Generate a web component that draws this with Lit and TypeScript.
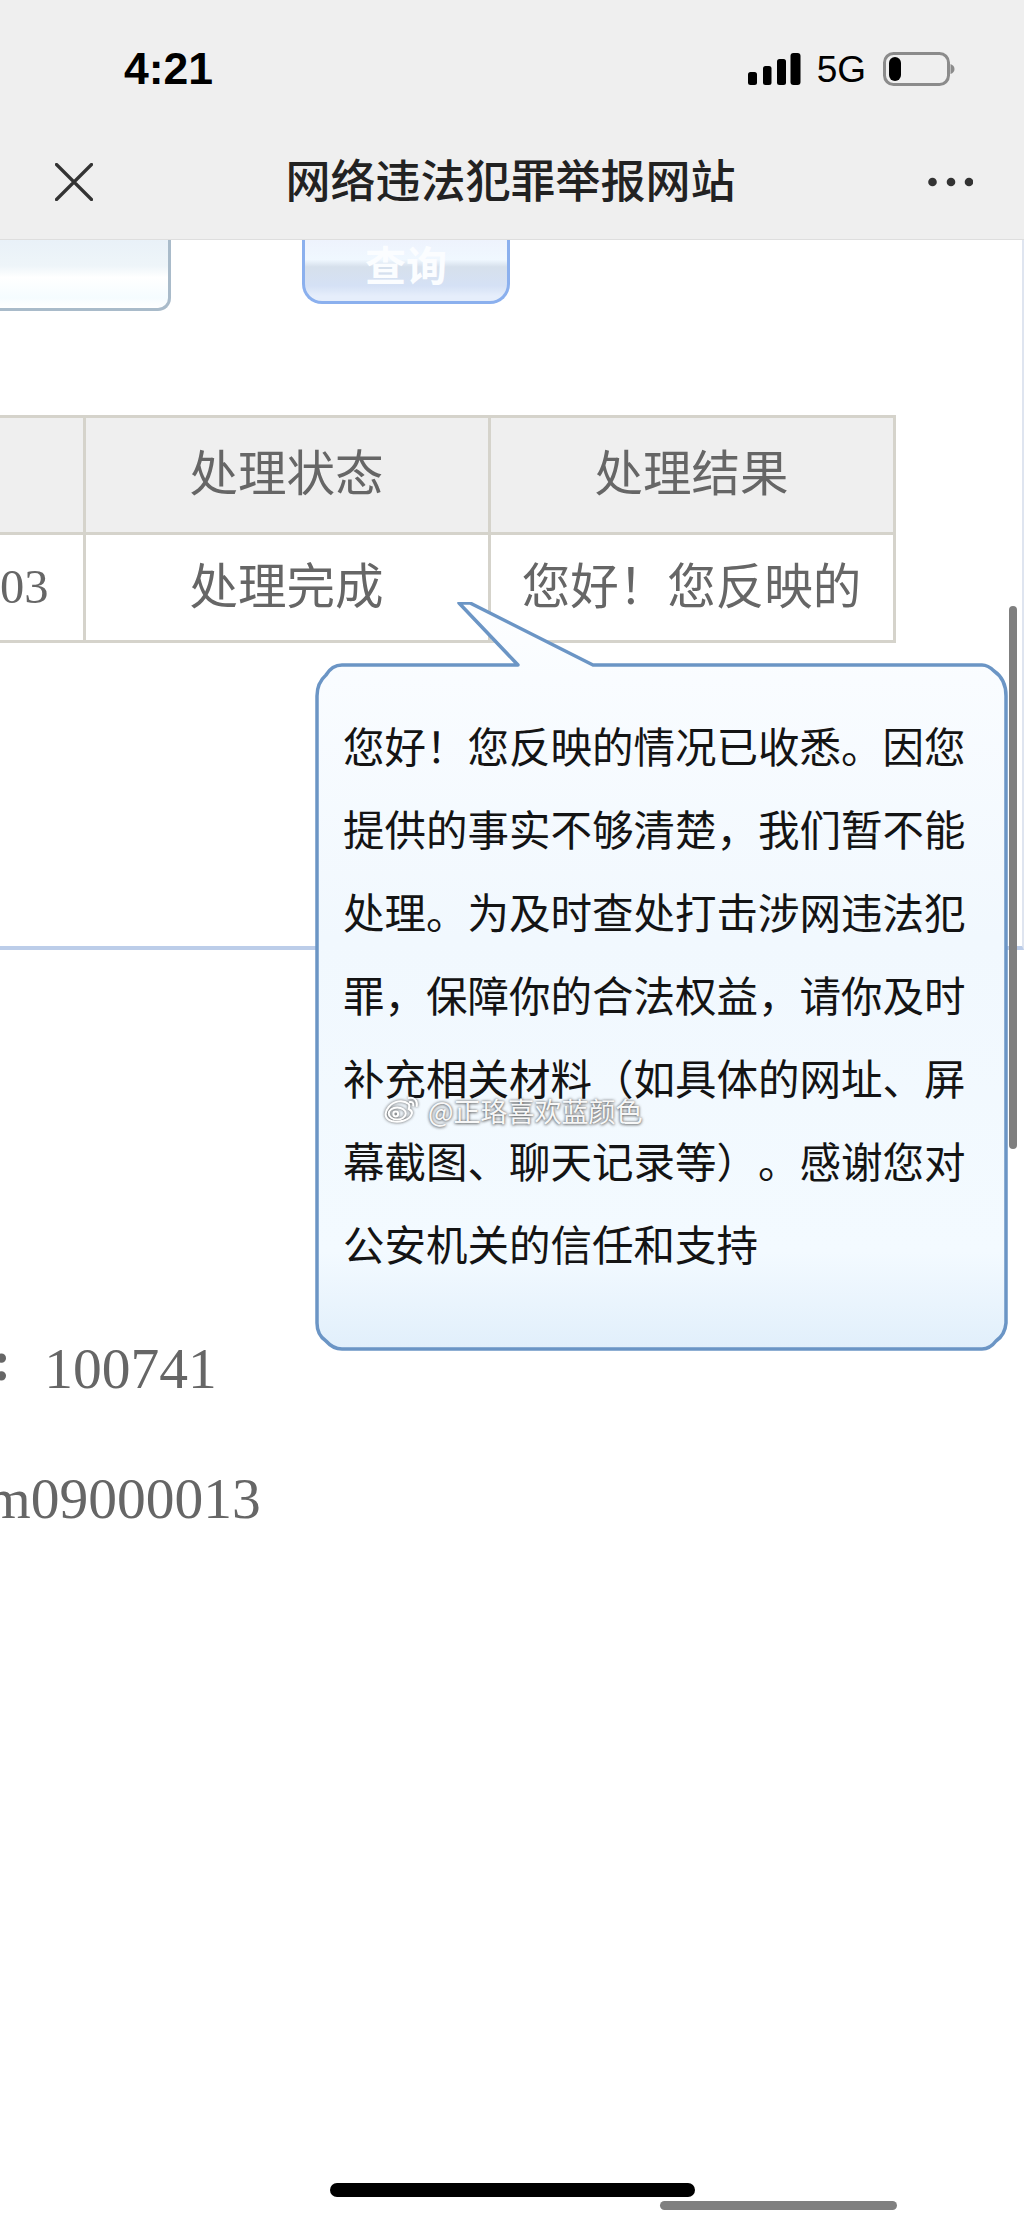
import { LitElement, html, css, svg } from "lit";
import { customElement } from "lit/decorators.js";

const LINES = [
  "您好！您反映的情况已收悉。因您",
  "提供的事实不够清楚，我们暂不能",
  "处理。为及时查处打击涉网违法犯",
  "罪，保障你的合法权益，请你及时",
  "补充相关材料（如具体的网址、屏",
  "幕截图、聊天记录等）。感谢您对",
  "公安机关的信任和支持",
];

const bubblePath = "M342 63 L518 63 L459 1 L470 1 L593 63 L982 63 Q988 63 994 69 Q1006 77 1006 94 L1006 721 Q1005 733 996 739 Q990 747 982 747 L342 747 Q333 747 326 739 Q317 733 317 721 L317 94 Q317 81 326 73 Q332 63 342 63 Z";

@customElement("app-root")
export class AppRoot extends LitElement {
  static styles = css`
    :host {
      display: block;
      position: relative;
      width: 1024px;
      height: 2217px;
      overflow: hidden;
      background: #fff;
      font-family: "Liberation Sans", "Noto Sans CJK SC", sans-serif;
    }
    .header {
      box-sizing: border-box;
      height: 240px;
      background: #efefef;
      border-bottom: 1px solid #dedede;
      display: flex;
      flex-direction: column;
    }
    .status {
      display: flex;
      align-items: center;
      height: 138px;
      padding: 0 69px 0 124px;
    }
    .time {
      font-size: 44.5px;
      font-weight: 700;
      color: #000;
      line-height: 1;
    }
    .status-right {
      margin-left: auto;
      display: flex;
      align-items: center;
      gap: 16px;
    }
    .net {
      font-size: 37px;
      color: #000;
      line-height: 1;
      margin-right: 1px;
    }
    .signal,
    .battery {
      display: block;
    }
    .nav {
      display: flex;
      align-items: center;
      justify-content: space-between;
      padding: 0 51px 0 55px;
      height: 88px;
    }
    .title {
      font-family: "Noto Sans CJK SC", sans-serif;
      font-size: 45px;
      font-weight: 500;
      color: #222;
      line-height: 1;
      margin-bottom: 7px;
    }
    .panel {
      box-sizing: border-box;
      height: 710px;
      border-right: 2px solid #dfe5f0;
      border-bottom: 4px solid #bccde9;
      overflow: hidden;
    }
    .search {
      display: flex;
      align-items: flex-start;
      gap: 131px;
      height: 71px;
      margin-bottom: 104px;
    }
    .input {
      box-sizing: border-box;
      width: 171px;
      height: 71px;
      border-right: 3px solid #a9bbca;
      border-bottom: 3px solid #a9bbca;
      border-bottom-right-radius: 13px;
      background: linear-gradient(#e9f1f8 0%, #eef5f9 38%, #fff 55%, #f5fcff 85%, #fff 100%);
    }
    .btn {
      box-sizing: border-box;
      width: 208px;
      height: 64px;
      border: 3.5px solid #8bb0ee;
      border-top: none;
      border-radius: 0 0 20px 20px;
      background: linear-gradient(#eef3fd 0%, #f0f8ff 32%, #d6e0ec 44%, #d5e1f5 75%, #e6eefb 92%);
      color: #fbfdff;
      font-family: "Noto Sans CJK SC", sans-serif;
      font-size: 41px;
      font-weight: 700;
      text-align: center;
      line-height: 46px;
    }
    table {
      border-collapse: collapse;
      table-layout: fixed;
      width: 894px;
      font-family: "Noto Sans CJK SC", sans-serif;
      color: #666;
      font-size: 48.5px;
    }
    th,
    td {
      box-sizing: border-box;
      border: 3px solid #d5d3cb;
      padding: 0 0 9px;
      text-align: center;
      white-space: nowrap;
      overflow: hidden;
      font-weight: 400;
      line-height: 1;
    }
    th {
      height: 117px;
      background: #efefef;
    }
    td {
      height: 108px;
    }
    th:first-child,
    td:first-child {
      border-left: none;
    }
    .c0 {
      width: 84px;
    }
    .c1 {
      width: 405px;
    }
    .c2 {
      width: 405px;
    }
    td.num {
      font-family: "Liberation Serif", serif;
      text-align: right;
      padding: 0 36px 0 0;
    }
    .foot {
      font-family: "Liberation Serif", serif;
      font-size: 57.5px;
      color: #666;
      line-height: 1;
    }
    .post {
      display: flex;
      align-items: center;
      gap: 33px;
      margin-top: 382px;
    }
    .colon {
      margin-left: -8px;
      margin-bottom: 16px;
      font-weight: 700;
    }
    .icp {
      margin-top: 64px;
      margin-left: -14px;
    }
    .bubble {
      position: absolute;
      left: 0;
      top: 602px;
      width: 1024px;
      height: 750px;
    }
    .bubble svg {
      position: absolute;
      left: 0;
      top: 0;
    }
    .bubble-text {
      position: absolute;
      left: 343px;
      top: 102px;
      font-family: "Noto Sans CJK SC", sans-serif;
      font-size: 41.5px;
      line-height: 83px;
      color: #141414;
      white-space: nowrap;
      text-spacing-trim: space-all;
    }
    .bubble-text div {
      height: 83px;
    }
    .scroll-v {
      position: absolute;
      left: 1009px;
      top: 606px;
      width: 8px;
      height: 543px;
      border-radius: 4px;
      background: #7f7f7f;
    }
    .scroll-h {
      position: absolute;
      left: 660px;
      top: 2201px;
      width: 237px;
      height: 9px;
      border-radius: 5px;
      background: #808080;
    }
    .home {
      position: absolute;
      left: 330px;
      top: 2183px;
      width: 365px;
      height: 14px;
      border-radius: 7px;
      background: #000;
    }
    .mark {
      position: absolute;
      left: 382px;
      top: 1092px;
      display: flex;
      align-items: center;
      gap: 8px;
      font-family: "Noto Sans CJK SC", sans-serif;
      font-size: 27px;
      line-height: 30px;
      color: rgba(255, 255, 255, 0.95);
      text-shadow: 0 0 3px rgba(60, 60, 60, 0.75), 0 1px 3px rgba(60, 60, 60, 0.55);
    }
    .mark svg {
      filter: drop-shadow(0 0 1.5px rgba(50, 50, 50, 0.85));
    }
    .mark span {
      margin-top: 4px;
    }
  `;

  private signal() {
    return html`<svg class="signal" width="53" height="32" viewBox="0 0 53 32">
      <rect x="0" y="19" width="9" height="13" rx="2.5" fill="#000"></rect>
      <rect x="15" y="13" width="8.5" height="19" rx="2.5" fill="#000"></rect>
      <rect x="29" y="6" width="9" height="26" rx="2.5" fill="#000"></rect>
      <rect x="42.5" y="0" width="10" height="32" rx="3" fill="#000"></rect>
    </svg>`;
  }

  private battery() {
    return html`<svg class="battery" width="72" height="34" viewBox="0 0 72 34">
      <rect x="1.5" y="1.5" width="64" height="31" rx="9" fill="none" stroke="#8b8b8b" stroke-width="3"></rect>
      <rect x="6" y="5" width="12" height="24" rx="6" fill="#000"></rect>
      <path d="M67.5 12 Q71.5 13.5 71.5 17 Q71.5 20.5 67.5 22 Z" fill="#8b8b8b"></path>
    </svg>`;
  }

  private weibo() {
    return svg`<svg width="38" height="27" viewBox="0 0 34.5 27" fill="none" stroke="#fff" stroke-width="2" stroke-linecap="round">
      <path d="M25 8 C19 3 10 5 5 11 C0 17 1 23 8 25 C16 27 26 24 28 18 C29 15 27 14 25 13 C26 10 25.5 9 25 8 Z"></path>
      <ellipse cx="13.5" cy="17.5" rx="8.5" ry="6"></ellipse>
      <circle cx="12" cy="18" r="2.4"></circle>
      <path d="M25 2 C30 1 34 4 33 10"></path>
      <path d="M26 6 C28.5 5.5 30 7 29.5 9.5"></path>
    </svg>`;
  }

  render() {
    return html`
      <div class="header">
        <div class="status">
          <div class="time">4:21</div>
          <div class="status-right">
            ${this.signal()}
            <div class="net">5G</div>
            ${this.battery()}
          </div>
        </div>
        <div class="nav">
          <svg width="38" height="38" viewBox="0 0 38 38" fill="none" stroke="#333" stroke-width="3.2" stroke-linecap="round">
            <path d="M1.5 1.5 L36.5 36.5 M36.5 1.5 L1.5 36.5"></path>
          </svg>
          <div class="title">网络违法犯罪举报网站</div>
          <svg width="45" height="10" viewBox="0 0 45 10" fill="#333">
            <circle cx="4.5" cy="5" r="4.3"></circle>
            <circle cx="23" cy="5" r="4.3"></circle>
            <circle cx="41" cy="5" r="4.3"></circle>
          </svg>
        </div>
      </div>

      <div class="panel">
        <div class="search">
          <div class="input"></div>
          <div class="btn">查询</div>
        </div>
        <table>
          <colgroup>
            <col class="c0" />
            <col class="c1" />
            <col class="c2" />
          </colgroup>
          <tr>
            <th></th>
            <th>处理状态</th>
            <th>处理结果</th>
          </tr>
          <tr>
            <td class="num">03</td>
            <td>处理完成</td>
            <td>您好！您反映的</td>
          </tr>
        </table>
      </div>

      <div class="foot post">
        <div class="colon">:</div>
        <div>100741</div>
      </div>
      <div class="foot icp">m09000013</div>

      <div class="bubble">
        <svg width="1024" height="750" viewBox="0 0 1024 750">
          <defs>
            <linearGradient id="bubbleFill" x1="0" y1="0" x2="0" y2="1">
              <stop offset="0" stop-color="#fdfeff"></stop>
              <stop offset="0.1" stop-color="#f9fcff"></stop>
              <stop offset="0.45" stop-color="#f1f8fe"></stop>
              <stop offset="0.87" stop-color="#f3faff"></stop>
              <stop offset="1" stop-color="#e1effb"></stop>
            </linearGradient>
          </defs>
          <path d=${bubblePath} fill="url(#bubbleFill)" stroke="#6b95c5" stroke-width="3.5" stroke-linejoin="round"></path>
        </svg>
        <div class="bubble-text">${LINES.map((l) => html`<div>${l}</div>`)}</div>
      </div>

      <div class="mark">${this.weibo()}<span>@正珞喜欢蓝颜色</span></div>

      <div class="scroll-v"></div>
      <div class="scroll-h"></div>
      <div class="home"></div>
    `;
  }
}
